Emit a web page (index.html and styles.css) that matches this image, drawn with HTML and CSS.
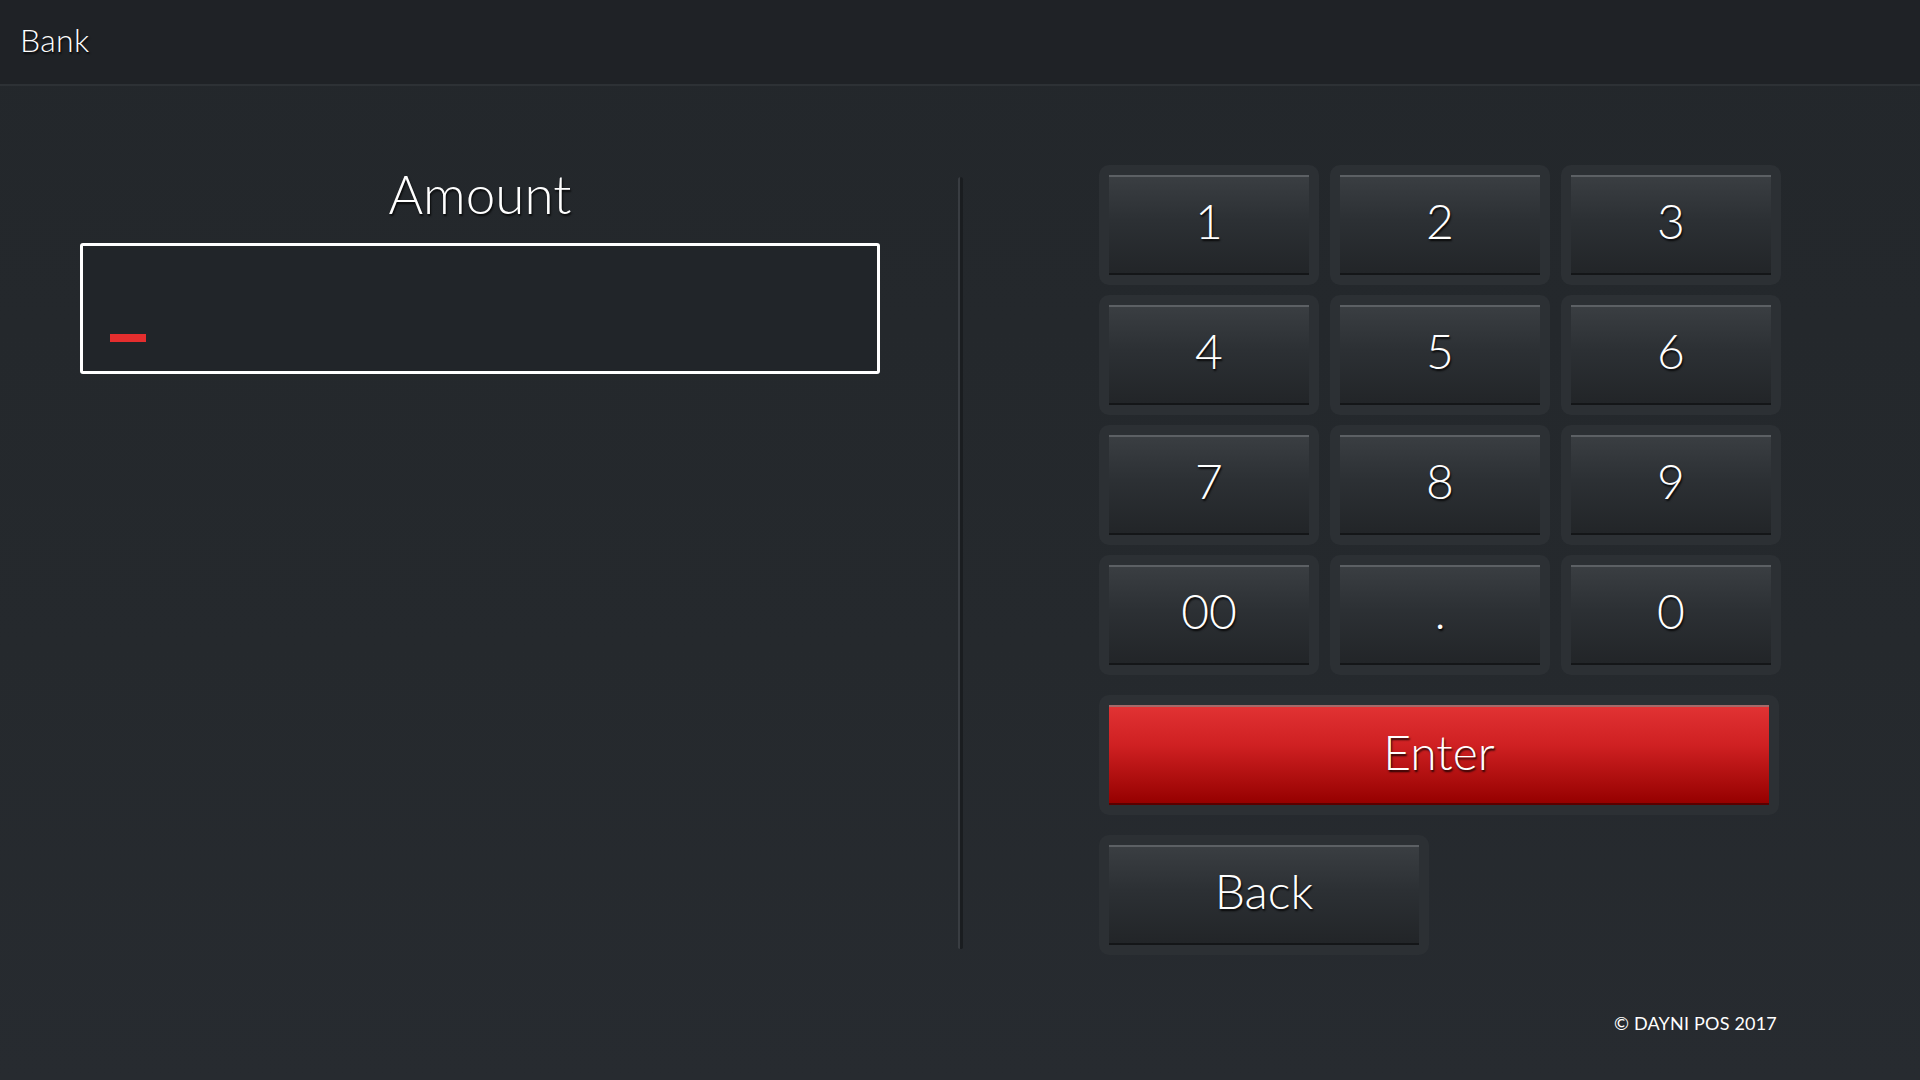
FILE: index.html
```html
<!DOCTYPE html>
<html>
<head>
<meta charset="utf-8">
<title>Bank</title>
<link rel="stylesheet" href="styles.css">
</head>
<body>
<header class="topbar"><span class="title">Bank</span></header>
<main class="content">
  <section class="amount-panel">
    <h1 class="amount-label">Amount</h1>
    <div class="amount-box"><span class="cursor"></span></div>
  </section>
  <div class="divider"></div>
  <section class="keypad-col">
    <div class="keypad">
      <div class="key"><div class="key-face">1</div></div>
      <div class="key"><div class="key-face">2</div></div>
      <div class="key"><div class="key-face">3</div></div>
      <div class="key"><div class="key-face">4</div></div>
      <div class="key"><div class="key-face">5</div></div>
      <div class="key"><div class="key-face">6</div></div>
      <div class="key"><div class="key-face">7</div></div>
      <div class="key"><div class="key-face">8</div></div>
      <div class="key"><div class="key-face">9</div></div>
      <div class="key"><div class="key-face">00</div></div>
      <div class="key"><div class="key-face">.</div></div>
      <div class="key"><div class="key-face">0</div></div>
    </div>
    <div class="key key-enter"><div class="key-face key-face-red">Enter</div></div>
    <div class="key key-back"><div class="key-face">Back</div></div>
    <footer class="copyright">© DAYNI POS 2017</footer>
  </section>
</main>
</body>
</html>
```

FILE: styles.css
```css
html, body {
  margin: 0;
  padding: 0;
}
body {
  width: 1920px;
  height: 1080px;
  overflow: hidden;
  background: linear-gradient(180deg, #23272b 0%, #25292d 60%, #272b30 100%);
  color: #ffffff;
  font-family: "Lato", "Open Sans", sans-serif;
  font-weight: 300;
}
.topbar {
  height: 84px;
  background: #1f2226;
  border-bottom: 2px solid #2d3135;
  display: flex;
  align-items: center;
  padding-left: 20px;
  box-sizing: content-box;
}
.title {
  font-size: 32px;
  letter-spacing: 0.3px;
  text-shadow: 1px 2px 2px rgba(0,0,0,0.8);
  margin-top: -6px;
}
.content {
  display: flex;
  align-items: flex-start;
}
.amount-panel {
  margin-left: 80px;
  width: 800px;
  padding-top: 76px;
}
.amount-label {
  margin: 0;
  font-weight: 300;
  font-size: 53px;
  line-height: 64px;
  text-align: center;
  text-shadow: 1px 2px 2px rgba(0,0,0,0.8);
}
.amount-box {
  margin-top: 17px;
  height: 131px;
  border: 3px solid #ffffff;
  border-radius: 3px;
  background: #212529;
  display: flex;
  align-items: flex-end;
  padding-left: 27px;
  padding-bottom: 29px;
  box-sizing: border-box;
}
.cursor {
  display: block;
  width: 36px;
  height: 8px;
  background: #e52e2e;
}
.divider {
  margin-left: 78px;
  margin-top: 91px;
  width: 3px;
  height: 772px;
  border-left: 2px solid #393d42;
  background: #1a1d20;
  border-radius: 3px 3px 2px 2px;
}
.keypad-col {
  margin-left: 136px;
  padding-top: 79px;
  width: 682px;
  display: flex;
  flex-direction: column;
}
.keypad {
  display: grid;
  grid-template-columns: repeat(3, 220px);
  grid-auto-rows: 120px;
  column-gap: 11px;
  row-gap: 10px;
}
.key {
  background: #2c3034;
  border-radius: 10px;
  padding: 10px;
  box-sizing: border-box;
  height: 120px;
}
.key-face {
  height: 100%;
  box-sizing: border-box;
  border-top: 2px solid #5c6064;
  border-bottom: 2px solid #141618;
  background: linear-gradient(180deg, #3a3e42 0%, #2c3034 45%, #222528 100%);
  display: flex;
  align-items: center;
  justify-content: center;
  font-size: 48px;
  text-shadow: 1px 2px 2px rgba(0,0,0,0.85);
  padding-bottom: 9px;
}
.key-enter {
  margin-top: 20px;
  width: 680px;
}
.key-face-red {
  border-top: 2px solid #a46a6a;
  border-bottom: 2px solid #5a0000;
  background: linear-gradient(180deg, #e13233 0%, #cf2022 40%, #ad0e0e 75%, #960000 100%);
  padding-bottom: 7px;
}
.key-back {
  margin-top: 20px;
  width: 330px;
}
.copyright {
  margin-top: 57px;
  text-align: right;
  padding-right: 4px;
  font-size: 18px;
  font-weight: 400;
  letter-spacing: 0.2px;
}
```
